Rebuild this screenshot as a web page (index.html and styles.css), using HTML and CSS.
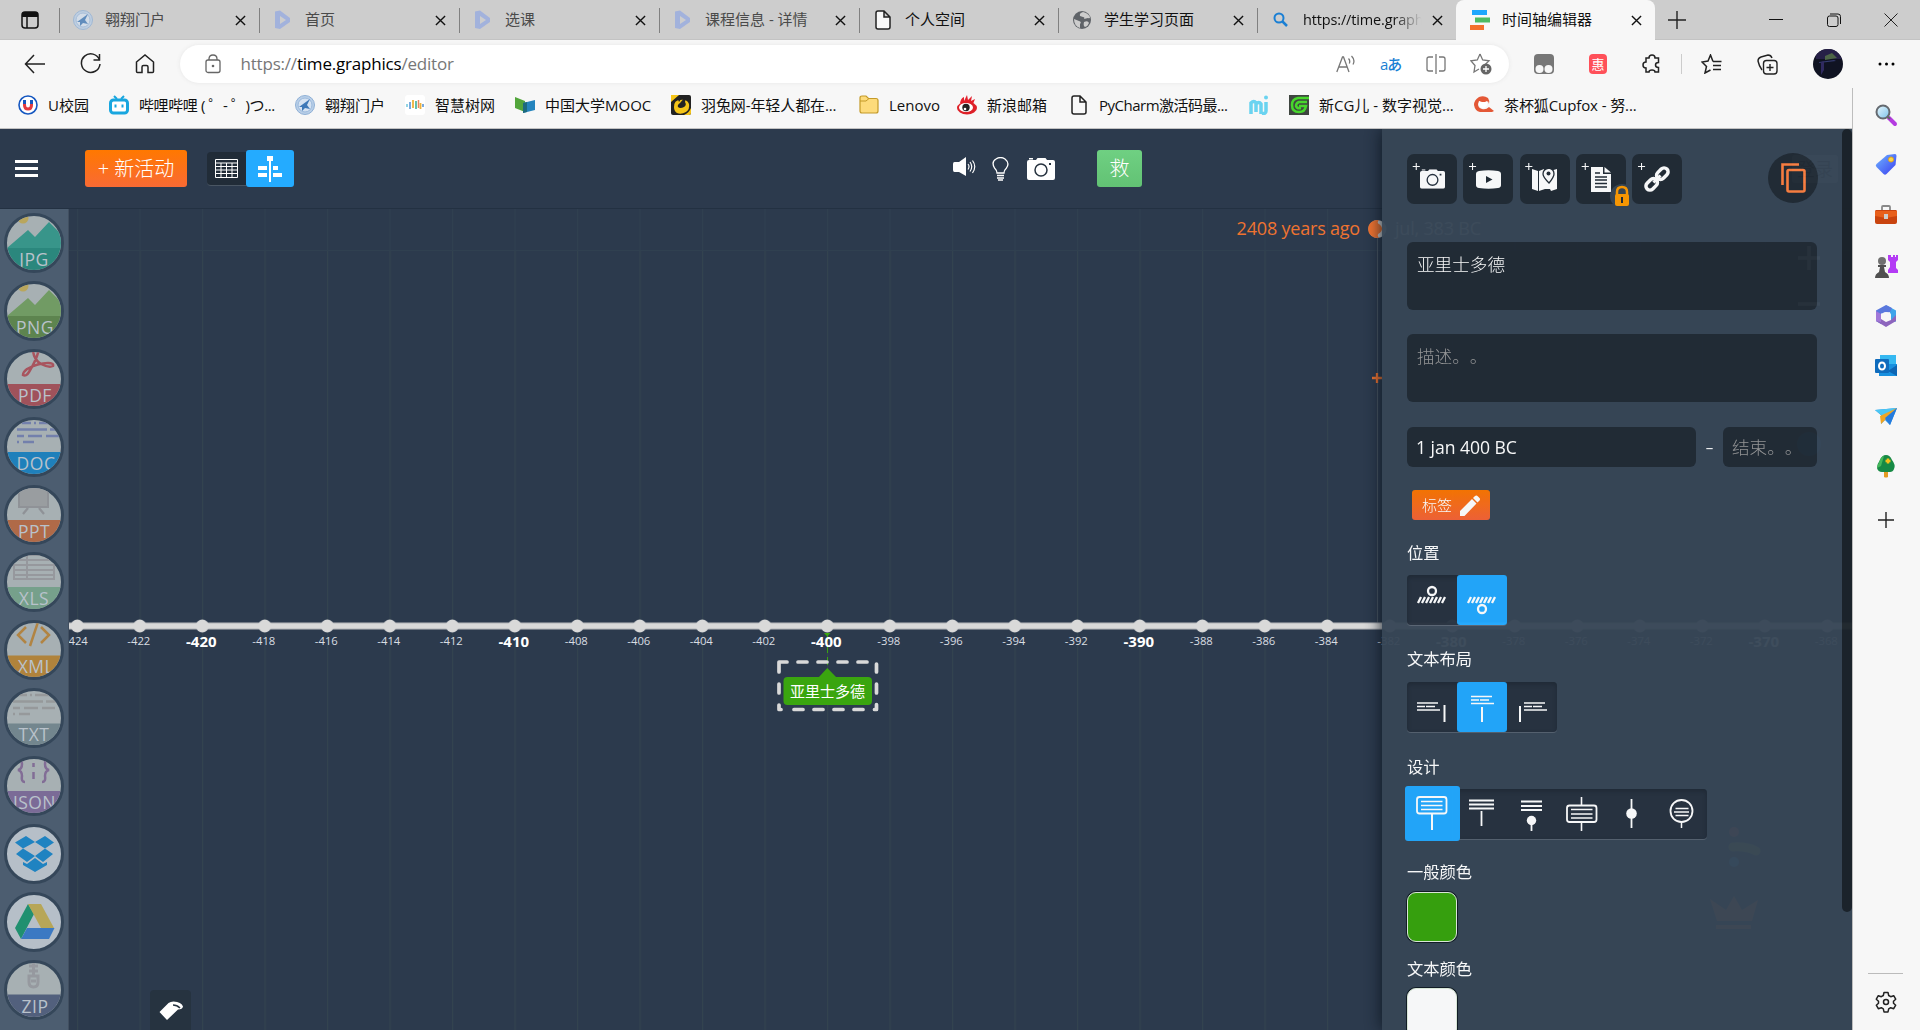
FILE: index.html
```html
<!DOCTYPE html>
<html lang="zh-CN">
<head>
<meta charset="utf-8">
<title>时间轴编辑器</title>
<link rel="stylesheet" href="styles.css">
</head>
<body>
<svg class="defs" width="0" height="0" aria-hidden="true">
  <defs>
    <symbol id="close" viewBox="0 0 12 12"><path d="M1 1l10 10M11 1L1 11" stroke="#111" stroke-width="1.5" fill="none"/></symbol>
    <symbol id="seal" viewBox="0 0 20 20"><circle cx="10" cy="10" r="9.5" fill="#b9cfe8" stroke="#8fb0d6"/><circle cx="10" cy="10" r="7" fill="#d4e2f2" stroke="#9bb9dc"/><path d="M4 12L15 4l-3 6 3 4-5-1-3 3v-4z" fill="#3d78b8"/></symbol>
    <symbol id="play" viewBox="0 0 20 20"><path d="M2 1.500l5-1L17 8v4L7 19l-5-1z" fill="#94a9e2"/><path d="M7 6l6 4-6 4z" fill="#cdcdcd"/></symbol>
    <symbol id="page" viewBox="0 0 20 20"><path d="M3 3q0-2 2-2h6l6 6v10q0 2-2 2H5q-2 0-2-2zM11 1v6h6" fill="#f8f8f8" stroke="#222" stroke-width="1.500"/></symbol>
    <symbol id="camera" viewBox="0 0 28 22"><path d="M2 0h4v1.500H2zM9 2l1.500-2h8L20 2h6q2 0 2 2v16q0 2-2 2H2q-2 0-2-2V4q0-2 2-2z" fill="#fff"/><circle cx="14" cy="12" r="6" fill="none" stroke="#26323f" stroke-width="1.500"/><path d="M22 5h2v2h-2z" fill="#26323f"/></symbol>
    <clipPath id="disc"><circle cx="30" cy="30" r="27"/></clipPath>
    <clipPath id="caption"><path d="M17 34h38v26H17z"/></clipPath>
    <linearGradient id="lens" x1="0" y1="0" x2="1" y2="1"><stop stop-color="#eaf8ff"/><stop offset="1" stop-color="#7cc3ea"/></linearGradient>
    <linearGradient id="tagblue" x1="0" y1="0" x2="1" y2="1"><stop stop-color="#6fb6ff"/><stop offset="1" stop-color="#3a3cf0"/></linearGradient>
    <pattern id="grid" x="77" y="209" width="62.5" height="821" patternUnits="userSpaceOnUse"><path d="M.5 0v42" stroke="#304050" stroke-width="1"/><path d="M.5 42v779" stroke="#33434f" stroke-width="1.300"/></pattern>
    <pattern id="dots" x="46.050" y="616" width="62.5" height="20" patternUnits="userSpaceOnUse"><circle cx="31.250" cy="10" r="6.500" fill="#d9d9d9"/></pattern>
  </defs>
</svg>

<div class="tabs">
  <div class="tab-menu"><svg width="18" height="18" viewBox="0 0 18 18"><rect x="1" y="1" width="16" height="16" rx="3" fill="none" stroke="#111" stroke-width="1.500"/><path d="M1 3q0-2 2-2h12q2 0 2 2v3H1z" fill="#111"/><path d="M6 6v11" stroke="#111" stroke-width="1.500"/></svg></div>
  <div class="tab asleep"><svg class="fav"><use href="#seal"/></svg><span>翱翔门户</span><svg class="x"><use href="#close"/></svg></div>
  <div class="tab asleep"><svg class="fav"><use href="#play"/></svg><span>首页</span><svg class="x"><use href="#close"/></svg></div>
  <div class="tab asleep"><svg class="fav"><use href="#play"/></svg><span>选课</span><svg class="x"><use href="#close"/></svg></div>
  <div class="tab asleep"><svg class="fav"><use href="#play"/></svg><span>课程信息 - 详情</span><svg class="x"><use href="#close"/></svg></div>
  <div class="tab"><svg class="fav"><use href="#page"/></svg><span>个人空间</span><svg class="x"><use href="#close"/></svg></div>
  <div class="tab"><svg class="fav" viewBox="0 0 20 20"><circle cx="10" cy="10" r="9" fill="#5f6368"/><path d="M11 2q-4 1-3 4l3 1q2 0 1 2l4-1q2 1 2-1-2-4-7-5zM2 9l5 2q3 1 1 3v4q-6-2-6-9zm10 3q4-2 5 1-1 3-4 4-2-1-1-5z" fill="#cdcdcd"/></svg><span>学生学习页面</span><svg class="x"><use href="#close"/></svg></div>
  <div class="tab"><svg class="fav" viewBox="0 0 20 20"><circle cx="8" cy="8" r="4.500" fill="none" stroke="#1a7fd4" stroke-width="2"/><path d="M11.500 11.500L16 16" stroke="#1a7fd4" stroke-width="2.500"/></svg><span class="fade">https://time.graph</span><svg class="x"><use href="#close"/></svg></div>
  <div class="tab active"><svg class="fav" viewBox="0 0 20 20"><path d="M2 0h15v5H2z" fill="#1ea7fd"/><path d="M5 7.500h15v5H5z" fill="#4dbb63"/><path d="M0 15h14v5H0z" fill="#f3702c"/></svg><span>时间轴编辑器</span><svg class="x"><use href="#close"/></svg></div>
  <svg class="plus" width="18" height="18" viewBox="0 0 18 18"><path d="M9 0v18M0 9h18" stroke="#222" stroke-width="1.400"/></svg>
  <div class="window-buttons">
    <svg width="14" height="14" viewBox="0 0 14 14"><path d="M0 6.500h14" stroke="#111"/></svg>
    <svg width="14" height="14" viewBox="0 0 14 14"><rect x=".5" y="3" width="10.500" height="10.500" rx="2" fill="none" stroke="#111"/><path d="M3 1h8q2.500 0 2.500 2.500V11" fill="none" stroke="#111"/></svg>
    <svg width="14" height="14" viewBox="0 0 14 14"><path d="M.5.5l13 13M13.500.5l-13 13" stroke="#222"/></svg>
  </div>
</div>

<div class="toolbar">
  <div class="nav">
    <svg width="22" height="20" viewBox="0 0 22 20"><path d="M21 10H2M10 1L1.500 10l8.500 9" fill="none" stroke="#222" stroke-width="1.500"/></svg>
    <svg width="22" height="22" viewBox="0 0 22 22"><path d="M19.500 7A9.300 9.300 0 1 0 20 11M19.500 1v6h-6" fill="none" stroke="#222" stroke-width="1.500"/></svg>
    <svg width="20" height="20" viewBox="0 0 20 20"><path d="M1.500 8L10 1l8.500 7v9.500q0 1-1 1H13V13q0-1.500-1.500-1.500h-3Q7 11.500 7 13v5.500H2.500q-1 0-1-1z" fill="none" stroke="#222" stroke-width="1.500"/></svg>
  </div>
  <div class="address">
    <svg width="16" height="20" viewBox="0 0 16 20"><rect x="1" y="6" width="14" height="12.500" rx="2" fill="none" stroke="#666" stroke-width="1.300"/><path d="M4 6V5q0-4 4-4t4 4v1" fill="none" stroke="#666" stroke-width="1.300"/><circle cx="8" cy="12" r="1.300" fill="#666"/></svg>
    <span class="url">https://<b>time.graphics</b>/editor</span>
    <div class="address-actions">
      <svg width="20" height="20" viewBox="0 0 20 20"><path d="M.8 18L6.500 3h1L13 18M3 13h8M12.500 4.500q2 2 0.800 5M15.500 2q4 4 1.500 8.500" fill="none" stroke="#777" stroke-width="1.300"/></svg>
      <span class="translate">aあ</span>
      <svg width="20" height="20" viewBox="0 0 20 20"><path d="M7 3H3Q1 3 1 5v10q0 2 2 2h4M13 3h4q2 0 2 2v10q0 2-2 2h-4M10 0v20" fill="none" stroke="#777" stroke-width="1.300"/></svg>
      <svg width="22" height="22" viewBox="0 0 22 22"><path d="M10 1l2.700 6 6.300.8-4.500 4.500M9 16l-5 3 1-6.500L1 7.800 7.300 7 10 1" fill="none" stroke="#777" stroke-width="1.300"/><circle cx="16" cy="16" r="5.500" fill="#666"/><path d="M16 13v6M13 16h6" stroke="#fff" stroke-width="1.300"/></svg>
    </div>
  </div>
  <div class="extensions">
    <svg width="20" height="20" viewBox="0 0 20 20"><rect width="20" height="20" rx="4" fill="#777"/><circle cx="5.500" cy="15" r="4" fill="#f7f7f7"/><circle cx="14.500" cy="15" r="4" fill="#f7f7f7"/></svg>
    <span class="deal">惠</span>
    <svg width="20" height="20" viewBox="0 0 20 20"><path d="M4 4h3q0-3 3-3t3 3h3.500v4.500q-3 0-3 2.500t3 2.500V18H13q0-2-3-2t-3 2H4v-4q-3 0-3-3t3-3z" fill="none" stroke="#222" stroke-width="1.500"/></svg>
    <i></i>
    <svg width="21" height="20" viewBox="0 0 21 20"><path d="M12 7.500L9.500 1 7 7 1 8l4.500 4.500L4 19l5.500-3M12 7.500h8.500M12 11.500h8M12 15.500h8" fill="none" stroke="#222" stroke-width="1.500"/></svg>
    <svg width="21" height="21" viewBox="0 0 21 21"><rect x="6.500" y="6.500" width="13.500" height="13.500" rx="3" fill="none" stroke="#222" stroke-width="1.400"/><path d="M13 10v7M9.500 13.500h7M5 16q-3-4-4-9Q1 4 4 3l7-2q3 0 4 3" fill="none" stroke="#222" stroke-width="1.400"/></svg>
    <svg width="30" height="30" viewBox="0 0 30 30"><clipPath id="face"><circle cx="15" cy="15" r="15"/></clipPath><g clip-path="url(#face)"><path fill="#101322" d="M0 0h30v30H0z"/><path d="M2 0h22l5 10H3z" fill="#262047"/><path d="M12 7l7-3 5 5-12 2z" fill="#4d6547"/><path d="M6 13l15-2 2 1-17 2z" fill="#353c70"/><path d="M8 13l3-1v9l-3 5z" fill="#302a60"/></g></svg>
    <svg width="17" height="4" viewBox="0 0 17 4"><circle cx="2" cy="2" r="1.500"/><circle cx="8.500" cy="2" r="1.500"/><circle cx="15" cy="2" r="1.500"/></svg>
  </div>
</div>

<div class="below">
<div class="main">
  <div class="bookmarks">
    <div class="bm w91"><svg viewBox="0 0 20 20"><circle cx="10" cy="10" r="9" fill="#fff" stroke="#1557c0" stroke-width="1.600"/><path d="M6.500 5v5q0 4 3.500 4t3.500-4V5" fill="none" stroke="#e23a3f" stroke-width="3"/><path d="M6.500 5v4M13.500 5v4" stroke="#1557c0" stroke-width="3"/></svg>U校园</div>
    <div class="bm w186"><svg viewBox="0 0 20 20"><path d="M5 1l3 3M15 1l-3 3" stroke="#18a6df" stroke-width="2"/><rect x="1.500" y="5" width="17" height="13" rx="3" fill="#fff" stroke="#18a6df" stroke-width="3"/><path d="M6.500 9.500v3M13.500 9.500v3" stroke="#18a6df" stroke-width="2"/></svg><span class="bili">哔哩哔哩 ( ゜- ゜)つ...</span></div>
    <div class="bm w110"><svg viewBox="0 0 20 20"><use href="#seal"/></svg>翱翔门户</div>
    <div class="bm w110"><svg viewBox="0 0 20 20"><rect width="20" height="20" rx="3" fill="#fff"/><path d="M2 9v3" stroke="#6fc6d8" stroke-width="1.500"/><path d="M5 7v7M18 9v3" stroke="#4f8fd5" stroke-width="1.500"/><path d="M8 5v8M15.500 8v6" stroke="#efb23a" stroke-width="1.800"/><path d="M11 6v8" stroke="#55b8a3" stroke-width="1.800"/><path d="M13.500 5v8" stroke="#e58a61" stroke-width="1.500"/></svg>智慧树网</div>
    <div class="bm w156"><svg viewBox="0 0 20 20"><path d="M0 2l10 4v11L0 13z" fill="#52a53b"/><path d="M20 5L8 8v10l12-3z" fill="#2484bd"/><path d="M8 8l4-1v10l-4 1z" fill="#1d6a7e"/></svg>中国大学MOOC</div>
    <div class="bm w188"><svg viewBox="0 0 20 20"><rect width="20" height="20" rx="2" fill="#222"/><path d="M3 12Q3 5 9 5q7-1 9 4 1 5-3 8-5 3-9 1-3-2-3-6z" fill="#f5c518"/><path d="M15 1L9 8q-3 2-2 4 2 2 6 0 3-2 1-5zM7 4Q9 1 12 1L8 7z" fill="#222"/><path d="M0 0h8L0 7zM20 13v5q0 2-2 2h-5q5-2 7-7z" fill="#f5c518"/></svg><span class="tight">羽兔网-年轻人都在...</span></div>
    <div class="bm w98"><svg viewBox="0 0 20 20"><path d="M1 3q0-2 2-2h4l2.500 2.500H17q2 0 2 2V16q0 2-2 2H3q-2 0-2-2z" fill="#fddb7b" stroke="#c49a28" stroke-width="1.200"/><path d="M1 6h6l3-2.500" fill="none" stroke="#c49a28"/></svg>Lenovo</div>
    <div class="bm w112"><svg viewBox="0 0 20 20"><path d="M3 8Q4 3 7 2l0 4 3-6 1 5 4-4-1 5 4-2-2 5z" fill="#e4202c"/><ellipse cx="10" cy="13" rx="10" ry="6.500" fill="#dd2028"/><ellipse cx="9" cy="12.500" rx="7" ry="4.500" fill="#fff"/><circle cx="9" cy="12.500" r="3.700" fill="#222"/><circle cx="8" cy="14" r="1.300" fill="#fff"/></svg>新浪邮箱</div>
    <div class="bm w180"><svg viewBox="0 0 20 20"><use href="#page"/></svg><span class="tighter">PyCharm激活码最...</span></div>
    <div class="bm w40"><svg viewBox="0 0 20 20"><path d="M2 19V8q3-3 5 0v9M7 9q3-3 5 0v10M17 7v9q0 3-4 2.500" fill="none" stroke="#6ad3f0" stroke-width="3.500"/><circle cx="17" cy="2.500" r="2" fill="#6ad3f0"/></svg></div>
    <div class="bm w185"><svg viewBox="0 0 20 20"><path fill="#3f4640" d="M0 0h20v20H0z"/><path d="M20 3H9Q3 4 3 10q0 7 7 7 6 0 7-6h-7M18 7h-8q-3 1-3 4 1 3 5 2" fill="none" stroke="#47d72c" stroke-width="2.500"/></svg><span>新CG儿 - 数字视觉...</span></div>
    <div class="bm"><svg viewBox="0 0 20 20"><path d="M14 3Q10 0 5 2 0 5 0 10q1 6 6 7h12l2-1-5-4q-3 3-7 2-4-1-4-5l1-3 2 2h5l2-2 1 3q1-3-1-6z" fill="#e45836"/><path d="M5 6l3 1h3l2-1v4q-1 3-4 3t-4-3z" fill="#fff"/></svg><span class="tight">茶杯狐Cupfox - 努...</span></div>
  </div>

  <div class="app">
    <div class="header">
      <div class="burger"><i></i><i></i><i></i></div>
      <div class="new-event">+ 新活动</div>
      <div class="view-switch">
        <div class="view"><svg width="23" height="19" viewBox="0 0 23 19"><path d="M.5.5h22v18H.5zM.5 4h22M.5 7.500h22M.5 11h22M.5 14.500h22M6 4v14M11.500 4v14M17 4v14" fill="none" stroke="#fff"/></svg></div>
        <div class="view on"><svg width="26" height="26" viewBox="0 0 26 26"><path d="M13 0v26" stroke="#fff" stroke-width="2"/><path d="M10 0h6v5h-6zM1 10h9v4H1zM16 10h5v4h-5zM1 17h9v4H1zM16 17h9v4h-9z" fill="#fff"/></svg></div>
      </div>
      <div class="tools">
        <svg class="speaker" width="23" height="20" viewBox="0 0 23 20"><path d="M1.500 5H6l7-5v19L6 15H1.500Q0 15 0 13V7q0-2 1.500-2z" fill="#fff"/><path d="M15 7q2 2.500 0 5.500M17 5q3.500 4.500 0 9.500M19.500 3.500q4.500 6 0 12.500" fill="none" stroke="#fff" stroke-width="1.200"/></svg>
        <svg width="17" height="24" viewBox="0 0 17 24"><path d="M5 16q-.3-3-2.500-5Q-1 5 4 2q4.500-3 9 0 5 4 1.500 9-2.300 2-2.500 5zM5 18.500h7M5 21h7M6 23h5" fill="none" stroke="#fff" stroke-width="1.300"/></svg>
        <svg width="28" height="22"><use href="#camera"/></svg>
      </div>
      <div class="save">救</div>
      <div class="login">登录</div>
    </div>
    <div class="work">
      <div class="exports">
        <svg viewBox="0 0 60 60"><circle class="ring" cx="30" cy="30" r="28.500"/><g clip-path="url(#disc)"><circle cx="19" cy="5" r="5.500" fill="#b9a65c"/><path d="M3 35l21-18 7 7L45 9l16 16v10z" fill="#38958a"/><path d="M0 35h60v25H0z" fill="#2b877d"/><text x="30" y="53">JPG</text></g></svg>
        <svg viewBox="0 0 60 60"><circle class="ring" cx="30" cy="30" r="28.500"/><g clip-path="url(#disc)"><circle cx="19" cy="5" r="5.500" fill="#b9a65c"/><path d="M3 35l21-18 7 7L45 9l16 16v10z" fill="#719b64"/><path d="M0 35h60v25H0z" fill="#5d844f"/><text x="31" y="53">PNG</text></g></svg>
        <svg viewBox="0 0 60 60"><circle class="ring" cx="30" cy="30" r="28.500"/><g clip-path="url(#disc)"><path d="M29 0q0 10 8 15 8 4 12 2 1-3-5-3-10 0-21 6-4 3-4 6 3 2 6-3Q33 10 35 0" fill="none" stroke="#a8545e" stroke-width="2.500"/><path d="M0 35h60v25H0z" fill="#a0525b"/><text x="31" y="53">PDF</text></g></svg>
        <svg viewBox="0 0 60 60"><circle class="ring" cx="30" cy="30" r="28.500"/><g clip-path="url(#disc)"><path d="M18 6h9M30 6h2M35 6h14M13 12.500h30M46 12.500h12M13 19h7M24 19h14M42 19h13M13 25h2M19 25h11" stroke="#7380ac" stroke-width="2.500"/><path d="M0 35h60v25H0z" fill="#1f80bb"/><text x="32" y="53">DOC</text></g></svg>
        <svg viewBox="0 0 60 60"><circle class="ring" cx="30" cy="30" r="28.500"/><g clip-path="url(#disc)"><path d="M15 0h29v22H15z" fill="#999da0" stroke="#8f9297" stroke-width="2"/><path d="M24 23l-5 6M35 23l5 6" stroke="#8f9297" stroke-width="2.300"/><path d="M0 35h60v25H0z" fill="#b06a48"/><text x="30" y="53">PPT</text></g></svg>
        <svg viewBox="0 0 60 60"><circle class="ring" cx="30" cy="30" r="28.500"/><g clip-path="url(#disc)"><path d="M10 3h40v24H10zM10 8h40M10 13h40M10 18h40M10 23h40M23 3v24" fill="none" stroke="#96989d" stroke-width="2"/><path d="M0 35h60v25H0z" fill="#76a08b"/><text x="30" y="53">XLS</text></g></svg>
        <svg viewBox="0 0 60 60"><circle class="ring" cx="30" cy="30" r="28.500"/><g clip-path="url(#disc)"><path d="M22 7l-8 8 8 8M37 7l8 8-8 8M34 2l-8 24" fill="none" stroke="#b18443" stroke-width="2.500"/><path d="M0 35.500h60v25H0z" fill="#b0833c"/><text x="32" y="53">XML</text></g></svg>
        <svg viewBox="0 0 60 60"><circle class="ring" cx="30" cy="30" r="28.500"/><g clip-path="url(#disc)"><path d="M14 7h9M26 7h2M31 7h14M9 13.500h30M42 13.500h12M9 20h7M20 20h14M38 20h13M9 26h2M15 26h11" stroke="#96999b" stroke-width="2.500"/><path d="M0 35.500h60v25H0z" fill="#73868e"/><text x="30" y="53">TXT</text></g></svg>
        <svg viewBox="0 0 60 60"><circle class="ring" cx="30" cy="30" r="28.500"/><g clip-path="url(#disc)"><path d="M20 2q-3 1-2 6 0 5-4 6 4 1 4 6-1 6 3 6M39 2q3 1 2 6 0 5 4 6-4 1-4 6 1 6-3 6M29.500 7v4M29.500 16v7" fill="none" stroke="#826d96" stroke-width="2.500"/><path d="M0 35h60v25H0z" fill="#7b6b97"/><text x="30.500" y="53">JSON</text></g></svg>
        <svg viewBox="0 0 60 60"><circle class="ring pale" cx="30" cy="30" r="28.500"/><path d="M22 12l-11 6.500 8 6L31 18zM41 12l9 6.500-9 6L31 18zM12 30l7-5.500L31 32l-8 6zM49 30l-8-5.500L31 32l8 6zM19 38v3l12 7 12-7v-3l-4 2-8-6-8 6z" fill="#1f83c1"/></svg>
        <svg viewBox="0 0 60 60"><circle class="ring pale" cx="30" cy="30" r="28.500"/><path d="M24 12l6 10-13 25-6-11z" fill="#209070"/><path d="M24 12h13l13 24H37z" fill="#b7a657"/><path d="M23 36h27.500L45 47H17z" fill="#3b79c3"/></svg>
        <svg viewBox="0 0 60 60"><circle class="ring" cx="30" cy="30" r="28.500"/><g clip-path="url(#disc)"><path d="M29.500 2v14M25 6h9M25 11h9" stroke="#96999f" stroke-width="3"/><path d="M25 16h9v6q0 5-4.500 5T25 22zM27 21h5" fill="none" stroke="#96999f" stroke-width="3"/><path d="M0 34.500h60v25H0z" fill="#52607d"/><text x="31" y="52.500">ZIP</text></g></svg>
      </div>
      <svg class="timeline" viewBox="69 209 1783 821">
        <path fill="url(#grid)" d="M69 209h1783v821H69z"/>
        <path d="M69 250.500h1783" stroke="#304050"/>
        <path d="M1377.500 238v390" stroke="#4a5763"/>
        <path d="M69 626h1783" stroke="#8b9199" stroke-width="7.500"/>
        <path d="M69 626h1783" stroke="#d9d9d9" stroke-width="5.500"/>
        <path d="M827.500 633v35" stroke="#3aa50f" stroke-dasharray="8 4"/>
        <path fill="url(#dots)" d="M69 616h1783v20H69z"/>
        <path d="M824 633h6.500l-3.300 3.500z" fill="#3aa50f"/>
        <g class="years">
          <text x="76.300" y="644.500">-424</text><text x="138.800" y="644.500">-422</text><text x="263.800" y="644.500">-418</text><text x="326.300" y="644.500">-416</text><text x="388.800" y="644.500">-414</text><text x="451.300" y="644.500">-412</text><text x="576.300" y="644.500">-408</text><text x="638.800" y="644.500">-406</text><text x="701.300" y="644.500">-404</text><text x="763.800" y="644.500">-402</text><text x="888.800" y="644.500">-398</text><text x="951.300" y="644.500">-396</text><text x="1013.800" y="644.500">-394</text><text x="1076.300" y="644.500">-392</text><text x="1201.300" y="644.500">-388</text><text x="1263.800" y="644.500">-386</text><text x="1326.300" y="644.500">-384</text><text x="1388.800" y="644.500">-382</text><text x="1513.800" y="644.500">-378</text><text x="1576.300" y="644.500">-376</text><text x="1638.800" y="644.500">-374</text><text x="1701.300" y="644.500">-372</text><text x="1826.300" y="644.500">-368</text>
        </g>
        <g class="decades">
          <text x="201.300" y="647">-420</text><text x="513.800" y="647">-410</text><text x="826.300" y="647">-400</text><text x="1138.800" y="647">-390</text><text x="1451.300" y="647">-380</text><text x="1763.800" y="647">-370</text>
        </g>
        <rect x="783.500" y="677" width="88.500" height="28" rx="4" fill="#3aa50f"/><path d="M818 678l9.300-10 9.700 10z" fill="#3aa50f"/>
        <text class="event" x="790" y="696.500">亚里士多德</text>
        <path d="M779 672v-10h8M798 662h9M818 662h9M838 662h9M858 662h9M876.500 664v8M876.500 684v9M876.500 704.500v5h-2M863 709.500h-9M843 709.500h-9M823 709.500h-9M803 709.500h-9M781 709.500h-2V705M779 693v-9" fill="none" stroke="#d9d9d9" stroke-width="3.700" stroke-linejoin="round" stroke-linecap="round"/>
        <text class="ago" x="1360" y="235" text-anchor="end">2408 years ago</text>
        <circle cx="1377.500" cy="229" r="9" fill="#d0d0d0"/><path d="M1379 220.200a9 9 0 1 0 0 17.600q-3-3 1-5 4-4 0-8-4-2-1-4.600z" fill="#ef7330"/>
        <text class="ago moon" x="1395" y="235">jul, 383 BC</text>
        <path d="M1377 373v10M1372 378h10" stroke="#ef7330" stroke-width="2.300"/>
        <g fill="none" stroke="#fff" stroke-width="3.500" opacity=".8"><path d="M1809 246v24M1798 258h22M1798 304h22"/></g>
        <circle cx="1809" cy="444" r="12" fill="#1e6ca5"/>
        <circle cx="1734" cy="832" r="5" fill="#e04f4f"/><circle cx="1734" cy="862" r="5" fill="#1e9be8"/><path d="M1733 847q13-1 23 4" stroke="#8aa33c" stroke-width="9" stroke-linecap="round" fill="none"/>
        <path d="M1710 899l16 11 8-14 8 14 16-10-6 21h-35zM1716 925h35v4h-35z" fill="#e2772e"/>
        <path d="M150 1030v-36q0-4 4-4h33q4 0 4 4v36z" fill="#263340"/>
        <path d="M159.500 1012l9-9q2-1.500 5-1.500 8 .5 9.500 5-.5 3-5 3l-11 10.500z" fill="#fff"/><path d="M173 1005q4 0 7 3" stroke="#263340" stroke-width="1.500" fill="none"/>
      </svg>
    </div>

    <div class="panel">
      <div class="attach">
        <div class="add"><svg width="25" height="20" viewBox="0 0 28 22"><use href="#camera"/></svg></div>
        <div class="add"><svg width="25" height="19" viewBox="0 0 25 19"><path d="M3 1q9.500-1.500 19 0 3 .5 3 3v11q0 2.500-3 3-9.500 1.500-19 0-3-.5-3-3V4q0-2.500 3-3z" fill="#fff"/><path d="M10 6l6.500 3.500L10 13z" fill="#212b35"/></svg></div>
        <div class="add"><svg width="25" height="24" viewBox="0 0 25 24"><path d="M0 2l6 2v20l-6-2zM7 4l5-2 5 14V4h1v18l-5 0-6 2zM18 4l7-2v20l-6 2-1-2z" fill="#fff"/><path d="M17 1q5 1 5 6 0 3-5 9-6-6-6-9 0-5 6-6z" fill="#fff" stroke="#212b35" stroke-width="1.300"/><circle cx="16.500" cy="6.500" r="2" fill="#212b35"/></svg></div>
        <div class="add"><svg width="20" height="25" viewBox="0 0 20 25"><path d="M0 0h12v7h8v18H0zM13.500 0L20 5.500h-6.500z" fill="#fff"/><path d="M4 6h5M4 10h12M4 13h12M4 16.500h12M4 20h12" stroke="#212b35" stroke-width="1.300"/></svg><svg class="lock" width="24" height="24" viewBox="0 0 24 24"><circle cx="12" cy="12" r="12" fill="#374654"/><path d="M7 12V8q0-5 5-5t5 5v4" fill="none" stroke="#ff9a00" stroke-width="2.500"/><rect x="5" y="10" width="14" height="12" rx="2" fill="#ff9a00"/><path d="M12 13v6" stroke="#212b35" stroke-width="2"/></svg></div>
        <div class="add"><svg width="26" height="26" viewBox="0 0 26 26"><g transform="rotate(-45 13 13)" fill="none" stroke="#fff" stroke-width="3.500"><rect x="-1" y="9" width="13" height="8" rx="4"/><rect x="14" y="9" width="13" height="8" rx="4"/><path d="M8 13h10" stroke-width="3"/></g></svg></div>
        <div class="copy"><svg width="25" height="30" viewBox="0 0 25 30"><path d="M18 1.500H1.500V22" fill="none" stroke="#ff8040" stroke-width="2.600"/><rect x="6.500" y="7" width="17" height="21.500" rx="1.500" fill="none" stroke="#ff8040" stroke-width="2.600"/></svg></div>
      </div>
      <div class="field title">亚里士多德</div>
      <div class="field note">描述。。</div>
      <div class="dates"><div class="field start">1 jan 400 BC</div><span>–</span><div class="field end">结束。。</div></div>
      <div class="label-button">标签<svg width="20" height="21" viewBox="0 0 20 21"><path d="M0 16L12 4l4.500 4.500L4.500 21H0zM13 3l2-2q1.500-1 3 .500l1.500 1.500q1 1 0 2.500l-2 2z" fill="#fff"/></svg></div>
      <h3 class="h-pos">位置</h3>
      <div class="switch">
        <div><svg width="50" height="50" viewBox="0 0 50 50"><circle cx="25" cy="16" r="4" fill="none" stroke="#fff" stroke-width="2.300"/><path d="M11 28l3-6M15 28l3-6M19 28l3-6M23 28l3-6M27 28l3-6M31 28l3-6M35 28l3-6" stroke="#fff" stroke-width="2.300"/></svg></div>
        <div class="on"><svg width="50" height="50" viewBox="0 0 50 50"><circle cx="25" cy="34" r="4" fill="none" stroke="#fff" stroke-width="2.300"/><path d="M11 28l3-6M15 28l3-6M19 28l3-6M23 28l3-6M27 28l3-6M31 28l3-6M35 28l3-6" stroke="#fff" stroke-width="2.300"/></svg></div>
      </div>
      <h3 class="h-text">文本布局</h3>
      <div class="switch">
        <div><svg width="50" height="50" viewBox="0 0 50 50"><path d="M10 21h21M10 24.500h8M19 24.500h9M10 28h23" stroke="#fff" stroke-width="1.600"/><path d="M37.500 23v17" stroke="#fff" stroke-width="2"/></svg></div>
        <div class="on"><svg width="50" height="50" viewBox="0 0 50 50"><path d="M14 14.500h21M14 18h8M23 18h9M14 21.500h23" stroke="#fff" stroke-width="1.600"/><path d="M25 25v15" stroke="#fff" stroke-width="2"/></svg></div>
        <div><svg width="50" height="50" viewBox="0 0 50 50"><path d="M17 21h21M17 24.500h8M26 24.500h9M17 28h23" stroke="#fff" stroke-width="1.600"/><path d="M13 24v16" stroke="#fff" stroke-width="2"/></svg></div>
      </div>
      <h3 class="h-design">设计</h3>
      <div class="switch">
        <div class="on big"><svg width="50" height="50" viewBox="0 0 50 50"><rect x="10" y="9" width="29.500" height="16.500" rx="2.500" fill="none" stroke="#fff" stroke-width="1.800"/><path d="M14 13.500h21.500M14 17.500h21.500M14 21.500h21.500" stroke="#fff" stroke-width="1.600"/><path d="M25 26v16" stroke="#fff" stroke-width="2"/></svg></div>
        <div><svg width="50" height="50" viewBox="0 0 50 50"><path d="M12 11.500h25M12 15.500h25M12 19.500h25M24.500 22v15" stroke="#fff" stroke-width="1.800"/></svg></div>
        <div><svg width="50" height="50" viewBox="0 0 50 50"><path d="M14 12.500h21M14 17h21M14 21h21M24.500 30v12" stroke="#fff" stroke-width="1.800"/><circle cx="24.500" cy="31.500" r="4.700" fill="#fff"/></svg></div>
        <div><svg width="50" height="50" viewBox="0 0 50 50"><rect x="10" y="16.500" width="29.500" height="16.500" rx="2.500" fill="none" stroke="#fff" stroke-width="1.800"/><path d="M14 20.500h21.500M14 25h21.500M14 29h21.500M24.500 8v8M24.500 33v9" stroke="#fff" stroke-width="1.600"/></svg></div>
        <div><svg width="50" height="50" viewBox="0 0 50 50"><path d="M24.500 10v29" stroke="#fff" stroke-width="1.800"/><circle cx="24.500" cy="24.500" r="5.300" fill="#fff"/></svg></div>
        <div><svg width="50" height="50" viewBox="0 0 50 50"><circle cx="24.500" cy="22" r="11" fill="none" stroke="#fff" stroke-width="1.800"/><path d="M18.500 19.500h13M17 23h15M18.500 26.500h13M24.500 33v6" stroke="#fff" stroke-width="1.500"/></svg></div>
      </div>
      <h3 class="h-color">一般颜色</h3>
      <div class="swatch green"></div>
      <h3 class="h-fore">文本颜色</h3>
      <div class="swatch"></div>
      <div class="scroll"></div>
    </div>
  </div>
</div>

<div class="sidebar">
  <svg class="s1" viewBox="0 0 24 24"><path d="M15 15l6 6" stroke="#b43be0" stroke-width="4" stroke-linecap="round"/><path d="M13 13l3 3" stroke="#666" stroke-width="2"/><circle cx="9" cy="9" r="6.500" fill="url(#lens)" stroke="#656a70" stroke-width="2"/></svg>
  <svg viewBox="0 0 24 24"><path d="M13 2l8-1q1.500 0 1.500 2l-1 9-9 9q-1.500 1.500-3 0l-7-7q-1.500-1.500 0-3z" fill="url(#tagblue)"/><circle cx="17" cy="6.500" r="2.500" fill="#f7d54a" stroke="#e3a21b"/></svg>
  <svg viewBox="0 0 24 24"><path d="M8 7V4q0-1 1-1h6q1 0 1 1v3" fill="none" stroke="#888" stroke-width="1.800"/><path d="M2 7h20q1 0 1 2v10q0 2-2 2H3q-2 0-2-2V9q0-2 1-2z" fill="#c9440f"/><path d="M1 8h22v5L12 15 1 13z" fill="#e8601c"/><path d="M10 11h4v5h-4z" fill="#ccc"/></svg>
  <svg viewBox="0 0 24 24"><path d="M14 1h3v2h2V1h2v2h1V1h2v5l-2 2v6l2 2v3H14v-3l2-3V8l-2-2z" fill="#b43bf5"/><circle cx="8" cy="7" r="4" fill="#707070"/><path d="M4 11h8v2h-2l1 5q4 2 4 6H1q0-4 4-6l1-5H4z" fill="#505050"/></svg>
  <svg viewBox="0 0 24 24"><path d="M12 1l10 5.500v11l-5 1v-8z" fill="#3fa4ea"/><path d="M12 1L2 6.500V17l5 3V9.500L16 8l2-4z" fill="#5a78dd"/><path d="M2 17l10 6 10-6v-6l-5 5-5 2-5-3-3 1z" fill="#8d65bd"/><path d="M2 7l5 3v8l-5-1z" fill="#a178d8"/><circle cx="12" cy="12" r="4" fill="#f7f7f7"/></svg>
  <svg viewBox="0 0 24 24"><path d="M6 1h16v12H6z" fill="#35b8f1"/><path d="M5 10h18v12H5z" fill="#1890df"/><path d="M23 11l-9 6 9 5z" fill="#0d65b4"/><rect x="1" y="5" width="14" height="14" rx="1" fill="#0f6cbd"/><ellipse cx="8" cy="12" rx="3" ry="3.500" fill="none" stroke="#fff" stroke-width="2"/></svg>
  <svg viewBox="0 0 24 24"><path d="M1 6l22-2-7 17-5-5-4 4V11z" fill="#2491e8"/><path d="M1 6l22-2L8 12z" fill="#4cc6f3"/><path d="M23 4L7 20l-1-8z" fill="#f0a623"/><path d="M23 4L11 14l5 7z" fill="#257bdd"/></svg>
  <svg viewBox="0 0 24 24"><path d="M10 17h4v6q-2 1-4 0z" fill="#e49c23"/><path d="M12 1q4 0 6 5 4 5 2 9-1 3-4 3H8q-4 0-5-4 0-4 3-8 2-5 6-5z" fill="#178a45"/><path d="M10 2Q6 3 5 9q-2 2-2 5l4-2z" fill="#45b85b"/><path d="M14 4.500v5M11.500 7h5" stroke="#f5c01c" stroke-width="2.500"/></svg>
  <svg class="s9" viewBox="0 0 16 16"><path d="M8 0v16M0 8h16" stroke="#222" stroke-width="1.400"/></svg>
  <div class="settings"><svg width="22" height="22" viewBox="0 0 22 22"><path d="M9 1.500h4l.7 3 2 1.200 3-1 2 3.500-2.200 2v2l2.200 2-2 3.500-3-1-2 1.200-.7 3H9l-.7-3-2-1.200-3 1-2-3.500 2.200-2v-2l-2.200-2 2-3.500 3 1 2-1.200z" fill="none" stroke="#222" stroke-width="1.500" stroke-linejoin="round"/><circle cx="11" cy="11" r="2.500" fill="none" stroke="#222" stroke-width="1.500"/></svg></div>
</div>
</div>
</body>
</html>
```
FILE: styles.css
```css
* { box-sizing: border-box; }
body {
  margin: 0;
  width: 1920px;
  height: 1030px;
  overflow: hidden;
  background: #f7f7f7;
  color: #111;
  font: 15px/20px "Open Sans", "Noto Sans CJK SC", sans-serif;
  text-spacing-trim: space-all;
}
svg { display: block; flex: none; }
.defs { position: absolute; }

/* tab strip */
.tabs { display: flex; height: 40px; background: #cdcdcd; border-bottom: 1px solid #c3c3c3; }
.tab-menu { width: 59px; padding: 11px 0 0 21px; }
.tab { position: relative; display: flex; align-items: center; width: 199px; height: 40px; padding: 0 13px 0 14px; }
.tab.asleep { width: 200px; }
.tab::before { content: ""; position: absolute; left: 0; top: 8px; width: 1px; height: 25px; background: #808080; }
.tab span { flex: 1; margin-left: 12px; line-height: 39px; height: 40px; overflow: hidden; white-space: nowrap; color: #111; }
.tab.asleep span { color: #4a4a4a; }
.tab.asleep .fav { opacity: .75; }
.tab .fade { font-size: 14.5px; letter-spacing: -.15px; mask-image: linear-gradient(90deg, #000 75%, transparent 98%); }
.fav { width: 20px; height: 20px; }
.x { width: 11px; height: 11px; margin-left: 8px; }
.tab.active { z-index: 1; background: #f7f7f7; border-radius: 8px 8px 0 0; }
.tab.active::before { display: none; }
.plus { margin: 11px 0 0 13px; }
.window-buttons { display: flex; gap: 43.500px; margin: 13px 22px 0 auto; }

/* toolbar */
.toolbar { display: flex; align-items: center; height: 48px; }
.nav { display: flex; align-items: center; width: 180px; padding-left: 24px; gap: 33.500px; }
.address { display: flex; align-items: center; width: 1329px; height: 38px; padding: 0 17px 0 24.500px; border-radius: 19px; background: #fff; box-shadow: 0 0 4px #e6e6e6; }
.url { margin-left: 20px; font-size: 17px; letter-spacing: -.2px; color: #777; }
.url b { color: #000; font-weight: 400; }
.address-actions { display: flex; align-items: center; gap: 24px; margin-left: auto; }
.translate { color: #1a7fd4; font-size: 15px; letter-spacing: -1px; width: 22px; font-weight: 500; white-space: nowrap; }
.extensions { display: flex; align-items: center; width: 386px; padding-left: 25px; gap: 35px; }
.deal { width: 20px; height: 20px; border-radius: 4px; background: #ff5059; color: #fff; font-size: 13px; text-align: center; }
.extensions i { width: 1px; height: 20px; background: #ccc; margin: 0 -16px; }

.below { display: flex; height: 942px; }
.main { width: 1852px; }
.bookmarks { display: flex; align-items: center; height: 41px; padding: 0 0 6px 18px; border-bottom: 1px solid #c2c2c2; overflow: hidden; white-space: nowrap; }
.bm { display: flex; align-items: center; flex: none; }
.bm svg { width: 20px; height: 20px; margin-right: 10px; }
.bm { line-height: 18px; }
.w91 { width: 91px; } .w186 { width: 186px; } .w110 { width: 110px; } .w156 { width: 156px; }
.w188 { width: 188px; } .w98 { width: 98px; } .w112 { width: 112px; } .w180 { width: 180px; }
.w40 { width: 40px; } .w185 { width: 185px; }
.tight { letter-spacing: -.1px; }
.tighter { letter-spacing: -.5px; }
.bili { letter-spacing: -.4px; }

/* editor */
.app { position: relative; height: 901px; background: #2c3a4d; overflow: hidden; color: #fff; }
.header { display: flex; align-items: center; height: 80px; padding-left: 15px; border-bottom: 1px solid #233142; }
.header > * { flex: none; }
.burger { display: flex; flex-direction: column; gap: 4px; width: 23px; }
.burger i { height: 3px; background: #fff; }
.new-event { width: 102px; height: 37px; margin-left: 47px; border-radius: 3px; background: linear-gradient(#ff7800, #f96a34); font-size: 20px; font-weight: 300; line-height: 37px; text-align: center; white-space: nowrap; }
.view-switch { display: flex; align-items: center; margin-left: 20px; }
.view { display: flex; align-items: center; justify-content: center; width: 39px; height: 34px; background: #212c38; border-radius: 4px 0 0 4px; border-bottom: 1px solid #4a5663; }
.view.on { width: 48px; height: 37px; background: #24abff; border: 0; border-radius: 3px; }
.tools { display: flex; align-items: center; gap: 18px; margin-left: 659px; }
.speaker { margin: 0 -2px 4px 0; }
.save { width: 45px; height: 37px; margin-left: 42px; border-radius: 3px; background: linear-gradient(#6fd082, #62c274); font-size: 20px; font-weight: 300; line-height: 37px; text-align: center; }
.login { width: 46px; height: 28px; margin-left: 650px; border-radius: 3px; background: #738392; font-size: 18px; line-height: 28px; text-align: center; color: #111; white-space: nowrap; }
.work { display: flex; height: 821px; }
.exports { display: flex; flex-direction: column; gap: 7.900px; width: 69px; padding: 4px 0 0 4px; background: #4c5d70; border-right: 1px solid #414f60; }
.exports svg { width: 60px; height: 60px; }
.exports .ring { fill: #a7b0b3; stroke: #35475a; stroke-width: 3px; }
.exports .pale { fill: #b6bfc8; }
.exports text { fill: #b9c2cb; font: 17.500px "Open Sans", sans-serif; text-anchor: middle; letter-spacing: .5px; }
.timeline { width: 1783px; height: 821px; }
.years text { fill: #d9dde2; font: 11.3px "Open Sans", sans-serif; text-anchor: middle; }
.decades text { fill: #fff; font: 700 15px "Open Sans", sans-serif; text-anchor: middle; }
.event { fill: #fff; font: 400 15px "Noto Sans CJK SC", sans-serif; }
.ago { fill: #ef7330; font: 18px "Open Sans", sans-serif; letter-spacing: -.2px; }
.moon { fill: #d0d0d0; }

/* translucent settings drawer floating over the timeline */
.panel { position: absolute; left: 1382px; top: 0; width: 470px; height: 901px; padding: 25px 35px 0 25px; background: #374656; opacity: .96; box-shadow: 0 0 16px #0c1620; }
.attach { display: flex; gap: 6.300px; height: 50px; }
.add { position: relative; display: flex; align-items: center; justify-content: center; width: 50px; height: 50px; border-radius: 7px; background: #212b35; }
.add::before { content: "+"; position: absolute; left: 5px; top: 2px; font-size: 15px; line-height: 20px; }
.lock { position: absolute; left: 34px; top: 30px; }
.copy { display: flex; align-items: center; justify-content: center; width: 50px; height: 50px; margin: -1px -1px 0 auto; border-radius: 50%; background: #212b35; }
.field { border-radius: 6px; background: #212b35; font-size: 17.600px; padding: 8px 10px; line-height: 28px; white-space: nowrap; }
.title { height: 68px; margin-top: 38px; font-weight: 300; }
.note { height: 68px; margin-top: 24px; color: #999; font-weight: 300; }
.dates { display: flex; align-items: center; justify-content: space-between; height: 40px; margin-top: 25px; }
.dates .field { height: 40px; padding: 6px 9px; }
.start { width: 289px; letter-spacing: -.05px; }
.end { width: 94px; color: #999; font-weight: 300; }
.label-button { display: flex; align-items: center; gap: 8px; width: 78px; height: 30px; margin: 23px 0 0 5px; padding-left: 10px; border-radius: 3px; background: linear-gradient(#fb7600, #f46236); font-size: 15px; font-weight: 300; }
h3 { margin: 0; height: 24px; font-weight: 400; font-size: 16.300px; line-height: 23px; white-space: nowrap; }
.h-pos { margin-top: 22px; }
.h-text { margin-top: 23px; }
.h-design { margin-top: 24px; }
.h-color { margin-top: 22px; }
.h-fore { margin-top: 16px; }
.h-pos + .switch { margin-top: 9px; }
.h-text + .switch { margin-top: 10px; }
.h-design + .switch { margin-top: 9px; }
.switch { display: flex; width: max-content; height: 50px; border-radius: 4px; background: #273240; box-shadow: 0 1px 0 #566270, inset 0 2px 4px #1f2935; }
.switch > div { width: 50px; height: 50px; }
.switch .on { border-radius: 3px; background: #22a9ff; }
.switch .big { width: 55px; height: 55px; margin: -3px -3px 0 -2px; padding: 2px 0 0 2px; }
.swatch { width: 50px; height: 50px; margin-top: 7px; border: 1px solid #dfeedd; border-radius: 9px; background: #fff; box-shadow: 0 0 0 1px #111b24; }
.green { background: #37a40c; }
.h-fore + .swatch { margin-top: 6px; }
.scroll { position: absolute; right: 0; top: 0; width: 10px; height: 783px; border-radius: 5px; background: #1b232a; }

/* browser side rail */
.sidebar { display: flex; flex-direction: column; align-items: center; width: 68px; padding: 15px 2px 0 0; border-left: 1px solid #bdbdbd; }
.sidebar > svg { width: 24px; height: 24px; margin-bottom: 26.200px; }
.sidebar .s9 { width: 16px; height: 16px; margin-top: 7px; }
.settings { display: flex; justify-content: center; width: 35px; margin-top: auto; margin-bottom: 17px; padding-top: 17px; border-top: 1px solid #bbb; }
```
